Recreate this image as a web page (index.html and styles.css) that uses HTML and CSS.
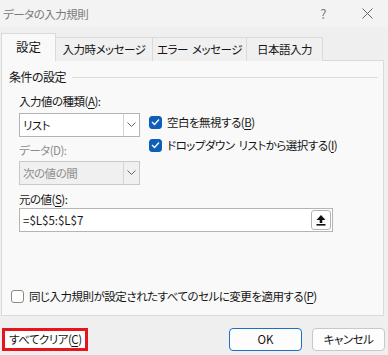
FILE: index.html
```html
<!DOCTYPE html>
<html lang="ja">
<head>
    <meta charset="UTF-8">
    <title>データの入力規則</title>
    <link rel="stylesheet" href="styles.css">
</head>
<body>
    <div class="dialog">
        <div class="titlebar">
            <span class="title">データの入力規則</span>
            <span class="help">?</span>
            <span class="close">
                <svg width="11" height="11" viewBox="0 0 11 11"><path d="M0.5 0.5 L10.5 10.5 M10.5 0.5 L0.5 10.5" stroke="#666" stroke-width="1" fill="none"/></svg>
            </span>
        </div>

        <div class="tabs">
            <div class="tab active">設定</div>
            <div class="tab">入力時メッセージ</div>
            <div class="tab">エラー メッセージ</div>
            <div class="tab">日本語入力</div>
        </div>

        <div class="panel">
            <div class="group-title"><span>条件の設定</span></div>

            <div class="form">
                <div class="columns">
                    <div class="col-left">
                        <div class="label">入力値の種類(<u>A</u>):</div>
                        <div class="select">
                            <span class="value">リスト</span>
                            <span class="arrow"><svg width="9" height="6" viewBox="0 0 9 6"><path d="M0.5 0.5 L4.5 4.5 L8.5 0.5" stroke="#666" fill="none"/></svg></span>
                        </div>
                        <div class="label label-gap disabled">データ(D):</div>
                        <div class="select select-disabled">
                            <span class="value">次の値の間</span>
                            <span class="arrow"><svg width="9" height="6" viewBox="0 0 9 6"><path d="M0.5 0.5 L4.5 4.5 L8.5 0.5" stroke="#666" fill="none"/></svg></span>
                        </div>
                    </div>
                    <div class="col-right">
                        <div class="check-row">
                            <span class="box checked"><svg width="9" height="8" viewBox="0 0 9 8"><path d="M1 4 L3.5 6.5 L8 1.5" stroke="#fff" stroke-width="1.3" fill="none"/></svg></span>
                            <span>空白を無視する(<u>B</u>)</span>
                        </div>
                        <div class="check-row">
                            <span class="box checked"><svg width="9" height="8" viewBox="0 0 9 8"><path d="M1 4 L3.5 6.5 L8 1.5" stroke="#fff" stroke-width="1.3" fill="none"/></svg></span>
                            <span>ドロップダウン リストから選択する(<u>I</u>)</span>
                        </div>
                    </div>
                </div>

                <div class="label source-label">元の値(<u>S</u>):</div>
                <div class="source">
                    <span class="value">=$L$5:$L$7</span>
                    <span class="collapse-btn">
                        <svg width="10" height="11" viewBox="0 0 10 11"><path d="M5 0 L9.5 5 L6.3 5 L6.3 8 L3.7 8 L3.7 5 L0.5 5 Z" fill="#111"/><rect x="0.5" y="9" width="9" height="1.6" fill="#111"/></svg>
                    </span>
                </div>
            </div>

            <div class="check-row apply-all">
                <span class="box"></span>
                <span>同じ入力規則が設定されたすべてのセルに変更を適用する(<u>P</u>)</span>
            </div>
        </div>

        <div class="footer">
            <div class="btn clear">すべてクリア(<u>C</u>)</div>
            <div class="footer-right">
                <div class="btn primary">OK</div>
                <div class="btn">キャンセル</div>
            </div>
        </div>
    </div>
</body>
</html>
```

FILE: styles.css
```css
* {
    margin: 0;
    padding: 0;
    box-sizing: border-box;
}

body {
    background-color: #efefef;
    font-family: "Noto Sans CJK JP", "Noto Sans", sans-serif;
    font-size: 11.5px;
    letter-spacing: -0.5px;
    word-spacing: 2px;
    font-feature-settings: "palt";
    color: #161616;
    width: 388px;
    height: 355px;
    overflow: hidden;
}

u {
    text-decoration-thickness: 1px;
    text-underline-offset: 2px;
}

/* Title bar */
.titlebar {
    height: 27px;
    background: #f3f3f3;
    display: flex;
    align-items: center;
    padding-left: 3px;
}

.title {
    color: #7a7a7a;
    line-height: 16px;
    flex: 1;
}

.help {
    color: #7a7a7a;
    font-size: 13px;
    width: 20px;
    margin-right: 29px;
    text-align: center;
}

.close {
    display: flex;
    margin-right: 15px;
}

/* Tabs */
.tabs {
    display: flex;
    align-items: flex-end;
    height: 34px;
    padding-left: 1px;
    position: relative;
    z-index: 1;
    margin-bottom: -1px;
}

.tab {
    height: 24px;
    line-height: 22px;
    border: 1px solid #dadada;
    border-bottom: none;
    background: #f0f0f0;
    text-align: center;
    margin-left: -1px;
    white-space: nowrap;
}

.tab:nth-child(1) { width: 55px; margin-left: 0; }
.tab:nth-child(2) { width: 98px; }
.tab:nth-child(3) { width: 95px; }
.tab:nth-child(4) { width: 77px; }

.tab.active {
    height: 28px;
    line-height: 26px;
    background: #f9f9f9;
    font-size: 12.5px;
    letter-spacing: 0;
    position: relative;
    z-index: 2;
}

/* Panel */
.panel {
    margin-left: 1px;
    width: 383px;
    height: 256px;
    border: 1px solid #dadada;
    background: #f9f9f9;
    padding: 8px 0 11px 7px;
    display: flex;
    flex-direction: column;
}

.group-title {
    display: flex;
    align-items: center;
    line-height: 16px;
    font-size: 12px;
    padding-right: 5px;
}

.group-title::after {
    content: "";
    flex: 1;
    height: 1px;
    background: #dcdcdc;
    margin-left: 6px;
}

.form {
    padding-left: 10px;
    margin-top: 8px;
}

.columns {
    display: flex;
    gap: 9px;
}

.col-left {
    width: 121px;
}

.label {
    line-height: 16px;
    height: 16px;
}

.label.disabled {
    color: #8c8c8c;
}

.label-gap {
    margin-top: 5px;
}

.select {
    margin-top: 4px;
    height: 24px;
    border: 1px solid #b4b4b4;
    background: #fff;
    display: flex;
    align-items: center;
}

.select-disabled {
    margin-top: 3px;
    background: #f0f0f0;
    border-color: #c8c8c8;
    color: #8c8c8c;
}

.select .value {
    flex: 1;
    padding-left: 3px;
}

.arrow {
    width: 16px;
    height: 100%;
    border-left: 1px solid #d4d4d4;
    display: flex;
    align-items: center;
    justify-content: center;
}

.col-right {
    padding-top: 21px;
    display: flex;
    flex-direction: column;
    gap: 7px;
}

.check-row {
    display: flex;
    align-items: center;
    gap: 5px;
    line-height: 16px;
    white-space: nowrap;
}

.box {
    width: 13px;
    height: 13px;
    border: 1px solid #8a8a8a;
    border-radius: 3px;
    background: #fff;
    display: flex;
    align-items: center;
    justify-content: center;
}

.box.checked {
    background: #0f5fb8;
    border-color: #0f5fb8;
}

.source-label {
    margin-top: 6px;
}

.source {
    margin-top: 1px;
    width: 314px;
    height: 24px;
    border: 1px solid #b4b4b4;
    background: #fff;
    display: flex;
    align-items: center;
    padding-right: 1px;
}

.source .value {
    flex: 1;
    padding-left: 3px;
    letter-spacing: 0;
}

.collapse-btn {
    width: 20px;
    height: 20px;
    border: 1px solid #b4b4b4;
    border-radius: 3px;
    display: flex;
    align-items: center;
    justify-content: center;
}

.apply-all {
    margin-top: auto;
    margin-left: 2px;
}

/* Footer buttons */
.footer {
    display: flex;
    justify-content: space-between;
    padding: 12px 3px 0 2px;
}

.footer-right {
    display: flex;
    gap: 10px;
}

.btn {
    height: 23px;
    width: 73px;
    border: 1px solid #c8c8c8;
    border-radius: 4px;
    background: #fdfdfd;
    text-align: center;
    line-height: 21px;
    white-space: nowrap;
}

.btn.primary {
    border-color: #1e6fc4;
    letter-spacing: 0;
}

.btn.clear {
    width: 86px;
    border: 3px solid #e8141b;
    border-radius: 0;
    background: #fff;
    text-align: left;
    padding-left: 4px;
    line-height: 17px;
}
```
